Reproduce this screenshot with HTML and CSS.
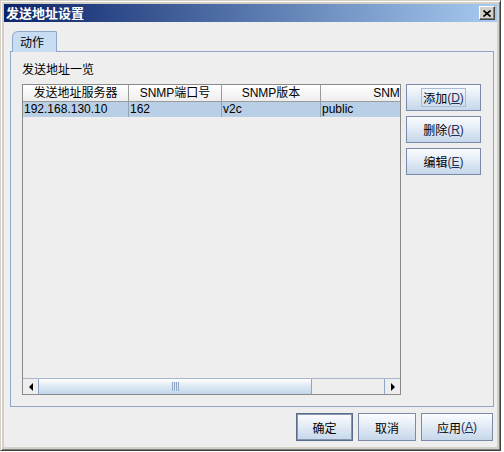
FILE: index.html
```html
<!DOCTYPE html>
<html>
  <head>
    <title>发送地址设置</title>
    <meta charset="utf-8" />
    <link rel="stylesheet" href="styles.css">
  </head>
  <body>
    <div class="window">
      <div class="titlebar">
        <span class="title">发送地址设置</span>
        <span class="close">
          <svg width="8" height="7" viewBox="0 0 8 7">
            <path d="M0.5 0.5 L7.5 6.5 M7.5 0.5 L0.5 6.5" stroke="#000" stroke-width="1.6" fill="none" />
          </svg>
        </span>
      </div>

      <div class="content">
        <div class="tabs">
          <div class="tab">动作</div>
        </div>

        <div class="panel">
          <div class="label">发送地址一览</div>
          <div class="main">
            <div class="table">
              <div class="viewport">
                <div class="row head">
                  <div class="cell c1">发送地址服务器</div>
                  <div class="cell c2">SNMP端口号</div>
                  <div class="cell c3">SNMP版本</div>
                  <div class="cell c4">SNMP团体名</div>
                </div>
                <div class="row selected">
                  <div class="cell c1">192.168.130.10</div>
                  <div class="cell c2">162</div>
                  <div class="cell c3">v2c</div>
                  <div class="cell c4">public</div>
                </div>
              </div>
              <div class="hscroll">
                <div class="arrow left"><i></i></div>
                <div class="thumb"><span class="grip"></span></div>
                <div class="track"></div>
                <div class="arrow right"><i></i></div>
              </div>
            </div>

            <div class="side">
              <button class="btn"><span class="focus">添加<span class="key">(<u>D</u>)</span></span></button>
              <button class="btn">删除<span class="key">(<u>R</u>)</span></button>
              <button class="btn">编辑<span class="key">(<u>E</u>)</span></button>
            </div>
          </div>
        </div>

        <div class="footer">
          <button class="btn default ok">确定</button>
          <button class="btn cancel">取消</button>
          <button class="btn apply">应用<span class="key">(<u>A</u>)</span></button>
        </div>
      </div>
    </div>
  </body>
</html>
```

FILE: styles.css
```css
body {
  margin: 0;
  background: #ffffff;
  font-family: "Liberation Sans", "Noto Sans CJK SC", sans-serif;
  font-size: 12px;
  color: #000;
}
.window {
  width: 501px;
  height: 451px;
  box-sizing: border-box;
  border: 1px solid;
  border-color: #d4d0c8 #404040 #404040 #d4d0c8;
  box-shadow: inset 1px 1px #ffffff, inset -1px -1px #808080;
  padding: 3px;
  background: #d4d0c8;
  display: flex;
  flex-direction: column;
}
.titlebar {
  height: 18px;
  background: linear-gradient(to right, #0a246a, #a6caf0);
  display: flex;
  align-items: center;
  justify-content: space-between;
}
.title {
  color: #fff;
  font-family: "Noto Sans CJK SC", sans-serif;
  font-weight: bold;
  font-size: 13px;
  line-height: 18px;
  padding-left: 2px;
}
.close {
  width: 14px;
  height: 12px;
  margin-right: 2px;
  background: #d4d0c8;
  border: 1px solid;
  border-color: #fff #404040 #404040 #fff;
  box-shadow: inset -1px -1px #808080;
  display: flex;
  align-items: center;
  justify-content: center;
}
.content {
  flex: 1;
  background: #eeeeee;
  padding: 9px 3px 5px 6px;
  display: flex;
  flex-direction: column;
}
.tabs {
  display: flex;
  padding-left: 2px;
}
.tab {
  position: relative;
  z-index: 1;
  width: 45px;
  height: 21px;
  box-sizing: border-box;
  margin-bottom: -1px;
  border: 1px solid #8ea6c8;
  border-bottom: none;
  border-radius: 6px 2px 0 0;
  background: #c8ddf2;
  font-family: "Noto Sans CJK SC", sans-serif;
  line-height: 20px;
  padding-left: 7px;
}
.panel {
  height: 356px;
  box-sizing: border-box;
  border: 1px solid #8ea6c8;
  padding: 9px 12px 11px 11px;
}
.label {
  line-height: 15px;
  font-family: "Noto Sans CJK SC", sans-serif;
  margin-bottom: 8px;
}
.main {
  display: flex;
  gap: 5px;
}
.table {
  width: 379px;
  height: 311px;
  box-sizing: border-box;
  border: 1px solid #8a8a8a;
  display: flex;
  flex-direction: column;
  overflow: hidden;
}
.viewport {
  flex: 1;
  overflow: hidden;
}
.row {
  display: flex;
  white-space: nowrap;
}
.cell {
  flex: none;
  box-sizing: border-box;
  border-right: 1px solid #9a9a9a;
  overflow: hidden;
}
.c1 { width: 106px; }
.c2 { width: 93px; }
.c3 { width: 99px; }
.c4 { width: 176px; }
.head .cell {
  height: 17px;
  line-height: 16px;
  text-align: center;
  background: linear-gradient(#ffffff, #eeeeee);
  border-bottom: 1px solid #9a9a9a;
}
.selected .cell {
  height: 15px;
  line-height: 15px;
  padding-left: 1px;
  background: #b8cfe5;
  border-right-color: #8fa3bd;
}
.hscroll {
  height: 16px;
  display: flex;
  border-top: 1px solid #a8b8cc;
  box-sizing: border-box;
}
.arrow {
  width: 15px;
  flex: none;
  background: #eeeeee;
  display: flex;
  align-items: center;
  justify-content: center;
}
.arrow.left {
  border-right: 1px solid #8ea6c8;
}
.arrow.right {
  border-left: 1px solid #8ea6c8;
}
.arrow i {
  width: 0;
  height: 0;
  border-top: 4px solid transparent;
  border-bottom: 4px solid transparent;
}
.arrow.left i {
  border-right: 4px solid #000;
}
.arrow.right i {
  border-left: 4px solid #000;
}
.thumb {
  width: 273px;
  flex: none;
  box-sizing: border-box;
  border-right: 1px solid #8ea6c8;
  background: linear-gradient(#ffffff, #dce8f4 50%, #c3d6ea);
  display: flex;
  align-items: center;
  justify-content: center;
}
.grip {
  width: 7px;
  height: 9px;
  background: repeating-linear-gradient(to right, #8ea6c8 0 1px, #dce8f4 1px 2px);
}
.track {
  flex: 1;
  background: #eeeeee;
}
.side {
  width: 75px;
  display: flex;
  flex-direction: column;
  gap: 5px;
}
.btn {
  height: 27px;
  box-sizing: border-box;
  border: 1px solid #7a8aa8;
  background: linear-gradient(#fbfcfe, #e6eef7 40%, #c6d7ea);
  font-family: "Noto Sans CJK SC", sans-serif;
  font-size: 12px;
  color: #000;
  padding: 0;
  display: flex;
  align-items: center;
  justify-content: center;
}
.key {
  font-family: "Liberation Sans", sans-serif;
  color: #1f2f55;
}
.focus {
  display: flex;
  align-items: center;
  height: 19px;
  box-sizing: border-box;
  border: 1px solid #a9bcd6;
  padding: 0 1px;
}
.footer {
  margin-top: 6px;
  display: flex;
  justify-content: flex-end;
  gap: 5px;
  padding-right: 1px;
}
.footer .btn {
  height: 28px;
}
.ok { width: 57px; }
.cancel { width: 58px; }
.apply { width: 72px; }
.btn.default {
  border-color: #5a6c88;
  box-shadow: inset 0 0 0 1px #8496b2;
}
```
